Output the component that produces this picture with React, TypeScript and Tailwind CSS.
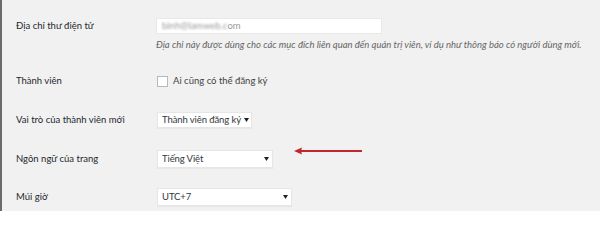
import React from "react";

function Caret() {
  return (
    <svg width="5" height="4" viewBox="0 0 5 4" className="shrink-0">
      <path d="M0 0 L5 0 L2.5 4 Z" fill="#222" />
    </svg>
  );
}

function Select({ w, h, text }: { w: string; h: string; text: string }) {
  return (
    <div
      className={`${w} ${h} flex items-center justify-between gap-[3px] bg-white border border-[#e6e6e6] pl-[4px] pr-[3px] text-[9.5px] text-[#32373c] whitespace-nowrap shadow-[0_1px_1px_rgba(0,0,0,0.04)]`}
    >
      <span className="leading-none tracking-[-0.1px]">{text}</span>
      <Caret />
    </div>
  );
}

export default function App() {
  return (
    <div
      className="relative w-[600px] h-[211px] bg-[#f1f1f1] overflow-hidden border-l-2 border-[#6b6b6b]"
      style={{ fontFamily: 'Lato, "Open Sans", sans-serif' }}
    >
      <div className="pl-[14px] text-[#23282d]">
        {/* Email row */}
        <div className="flex items-center pt-[18px]">
          <div className="w-[140px] text-[9.5px] leading-none">Địa chỉ thư điện tử</div>
          <div className="w-[226px] h-[16px] bg-white border border-[#e8e8e8] flex items-center pl-[5px] text-[9.5px] text-[#9a9a9a]">
            <span className="blur-[1.2px]">binh@lamweb.c</span>
            <span>om</span>
          </div>
        </div>
        <div className="pl-[140px] mt-[4px] text-[9.5px] leading-[14px] italic text-[#666] whitespace-nowrap">
          Địa chỉ này được dùng cho các mục đích liên quan đến quản trị viên, ví dụ như thông báo có người dùng mới.
        </div>

        {/* Membership */}
        <div className="flex items-center mt-[23px] h-[12px]">
          <div className="w-[141px] text-[9.5px] leading-none">Thành viên</div>
          <div className="flex items-center gap-[5px]">
            <div className="w-[11px] h-[11px] bg-white border border-[#b4b9be]" />
            <span className="text-[9.5px] leading-none text-[#444]">Ai cũng có thể đăng ký</span>
          </div>
        </div>

        {/* Role */}
        <div className="flex items-center mt-[25px]">
          <div className="w-[141px] text-[9.5px] leading-none">Vai trò của thành viên mới</div>
          <Select w="w-[95px]" h="h-[16px]" text="Thành viên đăng ký" />
        </div>

        {/* Language */}
        <div className="flex items-center mt-[22px]">
          <div className="w-[141px] text-[9.5px] leading-none">Ngôn ngữ của trang</div>
          <Select w="w-[116px]" h="h-[18px]" text="Tiếng Việt" />
        </div>

        {/* Timezone */}
        <div className="flex items-center mt-[20px]">
          <div className="w-[141px] text-[9.5px] leading-none">Múi giờ</div>
          <Select w="w-[135px]" h="h-[18px]" text="UTC+7" />
        </div>
      </div>

      {/* Red arrow annotation */}
      <svg
        className="absolute left-[292px] top-[147px]"
        width="70"
        height="8"
        viewBox="0 0 70 8"
      >
        <line x1="6" y1="4" x2="68" y2="4" stroke="#c0262b" strokeWidth="2" />
        <path d="M0 4 L8 0.5 L7 4 L8 7.5 Z" fill="#c0262b" />
      </svg>
    </div>
  );
}
